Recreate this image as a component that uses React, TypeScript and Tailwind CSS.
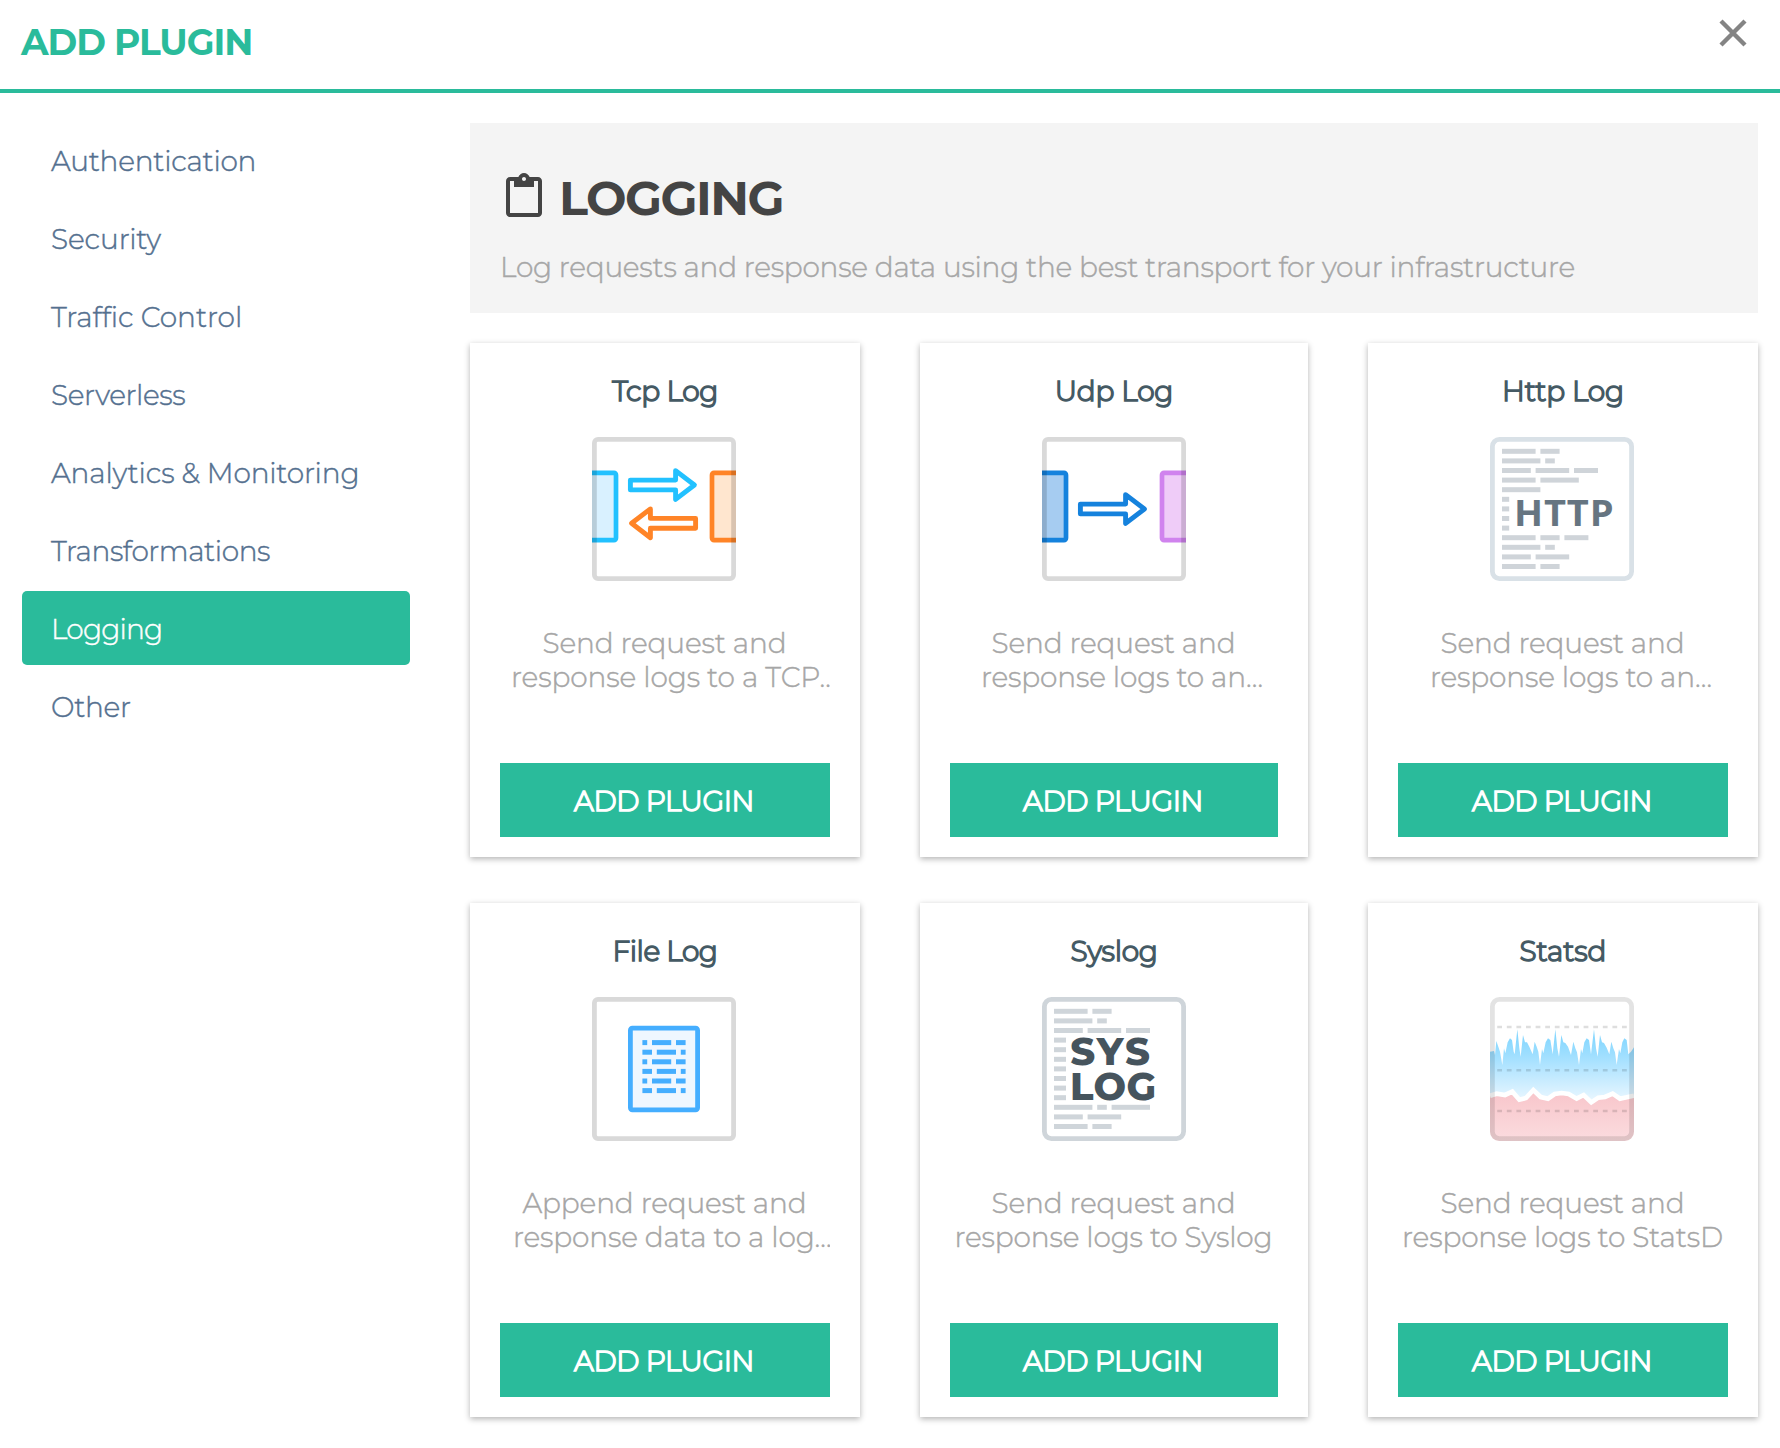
import React from 'react';

const categories = [
  { label: 'Authentication', tracking: 'tracking-[-0.25px]' },
  { label: 'Security', tracking: 'tracking-[-0.1px]' },
  { label: 'Traffic Control', tracking: 'tracking-[-0.05px]' },
  { label: 'Serverless', tracking: 'tracking-[-0.35px]' },
  { label: 'Analytics & Monitoring', tracking: 'tracking-[-0.12px]' },
  { label: 'Transformations', tracking: 'tracking-[-0.4px]' },
  { label: 'Logging', tracking: 'tracking-[-0.8px]' },
  { label: 'Other', tracking: 'tracking-[-0.35px]' },
];

type Bar = [number, number];

function Bars({ rows, x, y, color }: { rows: Bar[][]; x: number; y: number; color: string }) {
  return (
    <g fill={color}>
      {rows.map((row, r) =>
        row.map(([start, end], i) => (
          <rect key={`${r}-${i}`} x={x + start * 4.8} y={y + r * 9.6} width={(end - start) * 4.8} height={5} />
        )),
      )}
    </g>
  );
}

function Frame({ color, radius }: { color: string; radius: number }) {
  return <rect x="2.4" y="2.4" width="139.2" height="139.2" rx={radius} fill="none" stroke={color} strokeWidth="4.8" />;
}

function Ports({ left, leftFill, right, rightFill }: { left: string; leftFill: string; right: string; rightFill: string }) {
  return (
    <g strokeWidth="4.7" strokeLinejoin="round">
      <path d="M0 35.9H22a2 2 0 0 1 2 2V101.1a2 2 0 0 1-2 2H0" fill={leftFill} stroke={left} />
      <path d="M144 35.9H122a2 2 0 0 0-2 2V101.1a2 2 0 0 0 2 2H144" fill={rightFill} stroke={right} />
    </g>
  );
}

const arrow = 'M38.4 43.1H83.6V33.6L102.4 48L83.6 62.4V52.9H38.4Z';

function Svg({ children }: { children: React.ReactNode }) {
  return (
    <svg viewBox="0 0 144 144" className="block size-36">
      {children}
    </svg>
  );
}

function TcpIcon() {
  return (
    <Svg>
      <Ports left="#22c1ff" leftFill="#d9f1ff" right="#ff8427" rightFill="#ffe6cf" />
      <g fill="#fff" strokeWidth="4.9" strokeLinejoin="round">
        <path d={arrow} stroke="#22c1ff" />
        <path d={arrow} stroke="#ff8427" transform="matrix(-1 0 0 1 142 38.3)" />
      </g>
      <Frame color="rgba(0,0,0,.15)" radius={3.5} />
    </Svg>
  );
}

function UdpIcon() {
  return (
    <Svg>
      <Ports left="#1582dd" leftFill="#a6ccf1" right="#d083ee" rightFill="#efccf8" />
      <path d={arrow} fill="#fff" stroke="#1582dd" strokeWidth="4.9" strokeLinejoin="round" transform="translate(0 24)" />
      <Frame color="rgba(0,0,0,.15)" radius={3.5} />
    </Svg>
  );
}

const httpRows: Bar[][] = [
  [[0, 7], [8, 12]],
  [[0, 8], [9, 11]],
  [[0, 6], [7, 14], [15, 20]],
  [[0, 7], [8, 16]],
  [[0, 8]],
  [[0, 1.5]],
  [[0, 1.5]],
  [[0, 1.5]],
  [[0, 1.5]],
  [[0, 7], [8, 12], [13, 18]],
  [[0, 8], [9, 11]],
  [[0, 6], [7, 14]],
  [[0, 7], [8, 12]],
];

function HttpIcon() {
  return (
    <Svg>
      <Bars rows={httpRows} x={12} y={11.8} color="#cfd4d9" />
      <text
        x="24"
        y="89"
        textLength="100.5"
        lengthAdjust="spacingAndGlyphs"
        fill="#667581"
        className="font-['Open_Sans'] text-[35px] font-bold tracking-[0.8px]"
      >
        HTTP
      </text>
      <Frame color="#d9e1e7" radius={7} />
    </Svg>
  );
}

const fileRowA: Bar[] = [[0, 1], [2, 6], [7, 9]];
const fileRowB: Bar[] = [[0, 2], [3, 7], [8, 9]];

function FileIcon() {
  return (
    <Svg>
      <rect x="38.4" y="31.2" width="67.2" height="81.6" rx="2" fill="#eff7ff" stroke="#45aeff" strokeWidth="4.8" />
      <Bars rows={[fileRowA, fileRowB, fileRowA, fileRowB, fileRowA, fileRowB]} x={50.4} y={43.1} color="#45aeff" />
      <Frame color="#d9d9d9" radius={3.5} />
    </Svg>
  );
}

const syslogRows: Bar[][] = [
  [[0, 7], [8, 12]],
  [[0, 8], [9, 11]],
  [[0, 6], [7, 14], [15, 20]],
  [[0, 2.5]],
  [[0, 2.5]],
  [[0, 2.5]],
  [[0, 2.5]],
  [[0, 2.5]],
  [[0, 2.5]],
  [[0, 2.5]],
  [[0, 8], [9, 11], [12, 20]],
  [[0, 6], [7, 14]],
  [[0, 7], [8, 12]],
];

function SyslogIcon() {
  return (
    <Svg>
      <Bars rows={syslogRows} x={12} y={11.8} color="#cfd5da" />
      <g fill="#46545d" className="font-[Montserrat,Inter,sans-serif] text-[38.5px] font-extrabold">
        <text x="28.3" y="68.3" textLength="79.5">SYS</text>
        <text x="28" y="102.8" textLength="86">LOG</text>
      </g>
      <Frame color="#cfd5da" radius={7} />
    </Svg>
  );
}

const spikes =
  '30,200 42,198 45,210 49,168 56,188 60,200 67,240 72,190 76,205 83,172 90,160 96,165 101,200 104,208 112,133 118,190 122,215 129,150 135,172 141,172 148,185 158,208 164,170 170,185 175,200 180,240 186,192 190,205 197,172 204,160 211,165 218,208 226,133 232,190 237,215 244,150 250,172 256,174 264,185 273,210 280,170 286,190 291,202 297,240 303,192 307,205 313,172 320,160 327,165 333,208 342,133 348,190 353,215 360,150 366,172 372,174 380,188 388,208 394,170 400,190 405,202 410,240 417,192 421,205 427,172 433,160 440,165 445,208 453,200 462,187 462,345 30,345';
const wave =
  '30,332 50,326 75,330 97,320 118,344 138,339 160,315 182,336 204,341 224,327 245,324 266,327 290,341 311,330 334,352 355,338 375,336 398,326 420,341 440,337 462,332';

function StatsdIcon() {
  return (
    <Svg>
      <defs>
        <linearGradient id="blue" x1="0" y1="0" x2="0" y2="1">
          <stop offset="0.1" stopColor="#85d7ff" />
          <stop offset="0.4" stopColor="#a3e0ff" />
          <stop offset="1" stopColor="#e8f6ff" />
        </linearGradient>
        <linearGradient id="red" x1="0" y1="0" x2="0" y2="1">
          <stop offset="0" stopColor="#f8c5ca" />
          <stop offset="1" stopColor="#fbdcdf" />
        </linearGradient>
        <clipPath id="card">
          <rect width="144" height="144" rx="9" />
        </clipPath>
      </defs>
      <g clipPath="url(#card)">
        <g transform="translate(-10 -12) scale(.33333)">
          <polygon points={spikes} fill="url(#blue)" />
          <polygon points={`${wave} 462,470 30,470`} fill="url(#red)" />
          <polyline points={wave} fill="none" stroke="#fff" strokeWidth="14" />
        </g>
      </g>
      <path d="M7.2 30H137M7.2 73.2H137M7.2 114H137" stroke="rgba(0,0,0,.13)" strokeWidth="2.4" strokeDasharray="4.8 4.8" />
      <Frame color="rgba(0,0,0,.11)" radius={7} />
    </Svg>
  );
}

type Plugin = {
  name: string;
  Icon: () => React.ReactElement;
  iconPad: string;
  tracking: string;
  lines: [string, string];
  second: string;
};

const plugins: Plugin[] = [
  { name: 'Tcp Log', Icon: TcpIcon, iconPad: 'pr-[2px]', tracking: 'tracking-[-0.4px]', lines: ['Send request and', 'response logs to a TCP…'], second: 'pl-[11px] tracking-[-0.1px]' },
  { name: 'Udp Log', Icon: UdpIcon, iconPad: '', tracking: 'tracking-[-0.2px]', lines: ['Send request and', 'response logs to an…'], second: 'pl-[31px]' },
  { name: 'Http Log', Icon: HttpIcon, iconPad: 'pr-[2px]', tracking: 'tracking-[-0.2px]', lines: ['Send request and', 'response logs to an…'], second: 'pl-[32px]' },
  { name: 'File Log', Icon: FileIcon, iconPad: 'pr-[2px]', tracking: 'tracking-[-0.5px]', lines: ['Append request and', 'response data to a log…'], second: 'pl-[13px]' },
  { name: 'Syslog', Icon: SyslogIcon, iconPad: '', tracking: 'tracking-[-0.3px]', lines: ['Send request and', 'response logs to Syslog'], second: 'text-center pr-px' },
  { name: 'Statsd', Icon: StatsdIcon, iconPad: 'pr-[2px]', tracking: 'tracking-[-0.1px]', lines: ['Send request and', 'response logs to StatsD'], second: 'text-center pr-px' },
];

function PluginCard({ name, Icon, iconPad, tracking, lines, second }: Plugin) {
  return (
    <article className="flex h-[514px] flex-col items-center bg-white px-[30px] pt-[31px] shadow-[0_2px_6px_rgba(0,0,0,0.3)]">
      <h3 className={`leading-[34px] text-[#455a64] [-webkit-text-stroke:1.5px_#455a64] ${tracking}`}>{name}</h3>
      <div className={`mt-[29px] ${iconPad}`}>
        <Icon />
      </div>
      <p className="mt-[45px] w-full overflow-hidden leading-[34px] whitespace-nowrap text-[#a6a6a6]">
        <span className="block pr-px text-center">{lines[0]}</span>
        <span className={`block ${second}`}>{lines[1]}</span>
      </p>
      <button className="mt-[69px] h-[74px] w-full bg-[#2abb9b] pt-[2px] pr-[2px] tracking-[-0.4px] text-white [-webkit-text-stroke:1.5px_#fff]">
        ADD PLUGIN
      </button>
    </article>
  );
}

export default function App() {
  return (
    <div className="min-h-[1448px] w-[1780px] bg-white font-[Montserrat,Inter,sans-serif] text-[28px] font-light tracking-[-0.15px] [-webkit-text-stroke:0.45px_currentColor]">
      <header className="flex h-[93px] items-start justify-between border-b-4 border-[#2abb9b] pr-[33px] pl-[21px]">
        <h1 className="pt-[20px] text-[36px] leading-[44px] font-bold tracking-[-1.05px] text-[#2abb9b] [-webkit-text-stroke:0]">
          ADD PLUGIN
        </h1>
        <button aria-label="Close" className="pt-[19px]">
          <svg viewBox="0 0 28 28" className="block size-7">
            <path d="M2 2L26 26M26 2L2 26" stroke="#848484" strokeWidth="4.4" />
          </svg>
        </button>
      </header>
      <div className="flex gap-[60px] pt-[30px] pl-[22px]">
        <nav className="flex w-[388px] flex-col gap-1">
          {categories.map(({ label, tracking }) => (
            <a
              key={label}
              className={`flex h-[74px] items-center rounded-[5px] pt-[2px] pl-[29px] ${tracking} ${
                label === 'Logging' ? 'bg-[#2abb9b] text-white' : 'text-[#54708f]'
              }`}
            >
              {label}
            </a>
          ))}
        </nav>
        <main className="w-[1288px]">
          <section className="h-[190px] bg-[#f4f4f4] px-[30px] pt-[45px]">
            <h2 className="flex h-[60px] gap-[11px] text-[48px] leading-[60px] font-bold tracking-[-1.5px] text-[#444] [-webkit-text-stroke:0]">
              <svg viewBox="0 0 24 24" fill="currentColor" className="mt-[5px] size-12">
                <path d="M19 2h-4.18C14.4.84 13.3 0 12 0c-1.3 0-2.4.84-2.82 2H5c-1.1 0-2 .9-2 2v16c0 1.1.9 2 2 2h14c1.1 0 2-.9 2-2V4c0-1.1-.9-2-2-2zm-7 0c.55 0 1 .45 1 1s-.45 1-1 1-1-.45-1-1 .45-1 1-1zm7 18H5V4h2v3h10V4h2v16z" />
              </svg>
              LOGGING
            </h2>
            <p className="mt-[22px] leading-[34px] tracking-[-0.24px] whitespace-nowrap text-[#a6a6a6]">
              Log requests and response data using the best transport for your infrastructure
            </p>
          </section>
          <div className="mt-[30px] grid grid-cols-[390px_388px_390px] gap-x-[60px] gap-y-[46px]">
            {plugins.map((p) => (
              <PluginCard key={p.name} {...p} />
            ))}
          </div>
        </main>
      </div>
    </div>
  );
}
